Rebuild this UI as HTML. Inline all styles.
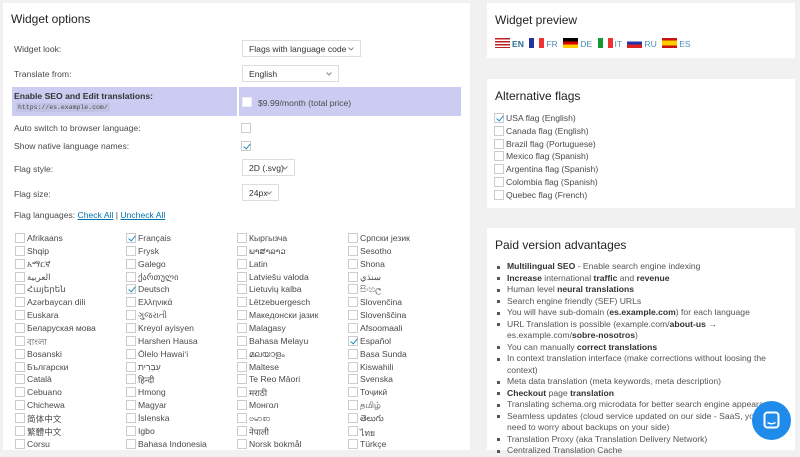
<!DOCTYPE html>
<html><head><meta charset="utf-8"><style>
*{margin:0;padding:0;box-sizing:border-box}
body{width:800px;height:450px;overflow:hidden;background:#f1f1f1;font-family:"Liberation Sans","Noto Sans CJK SC",sans-serif;font-size:8.6px;color:#4a4a4a;position:relative}
.p{position:absolute;background:#fff}
h2{position:absolute;font-size:12px;font-weight:normal;color:#222}
.a{position:absolute;white-space:nowrap}
.sel{position:absolute;border:1px solid #ddd;height:17px;background:#fff;padding:3px 6px;color:#333}
.sel svg{position:absolute;right:6px;top:6px}
.cb{position:absolute;width:10px;height:10px;border:1px solid #ccc;background:#fff}
.cb.c:after{content:"";position:absolute;left:3px;top:0px;width:3px;height:6px;border:solid #1e8cbe;border-width:0 1.5px 1.5px 0;transform:rotate(40deg)}
.g .r{position:absolute;height:12px;white-space:nowrap}
.g .r .cb{left:0;top:1px}
.g .r span{position:absolute;left:12px;top:1px}
a{color:#0073aa}
ul{position:absolute;list-style:none}
ul li{position:relative;padding-left:12px;line-height:11.5px;color:#555}
ul li:before{content:"";position:absolute;left:2px;top:4.5px;width:3px;height:3px;background:#555}
b{color:#333}
.f{display:inline-block;width:15px;height:10px;vertical-align:-1px;margin-right:2px}
</style></head><body>
<div class="p" style="left:3px;top:3px;width:467px;height:447px"></div>
<h2 style="left:11px;top:12px">Widget options</h2>
<div class="a" style="left:14px;top:44px">Widget look:</div>
<div class="sel" style="left:242px;top:40px;width:119px">Flags with language code<svg width="6" height="4"><path d="M0.5 0.5L3 3L5.5 0.5" fill="none" stroke="#888"/></svg></div>
<div class="a" style="left:14px;top:69px">Translate from:</div>
<div class="sel" style="left:242px;top:65px;width:97px">English<svg width="6" height="4"><path d="M0.5 0.5L3 3L5.5 0.5" fill="none" stroke="#888"/></svg></div>
<div class="a" style="left:12px;top:87px;width:225px;height:29px;background:#ccccf2"></div>
<div class="a" style="left:239px;top:87px;width:222px;height:29px;background:#ccccf2"></div>
<div class="a" style="left:14px;top:91px;font-weight:bold;color:#333">Enable SEO and Edit translations:</div>
<div class="a" style="left:16px;top:103px;font-family:'Liberation Mono',monospace;font-size:6.5px;background:#c2c2e4;padding:1px 2px">https://es.example.com/</div>
<div class="cb" style="left:242px;top:97px;border-color:#eee"></div>
<div class="a" style="left:258px;top:98px">$9.99/month (total price)</div>
<div class="a" style="left:14px;top:123px">Auto switch to browser language:</div>
<div class="cb" style="left:241px;top:123px"></div>
<div class="a" style="left:14px;top:141px">Show native language names:</div>
<div class="cb c" style="left:241px;top:141px"></div>
<div class="a" style="left:14px;top:164px">Flag style:</div>
<div class="sel" style="left:242px;top:159px;width:53px">2D (.svg)<svg width="6" height="4"><path d="M0.5 0.5L3 3L5.5 0.5" fill="none" stroke="#888"/></svg></div>
<div class="a" style="left:14px;top:189px">Flag size:</div>
<div class="sel" style="left:242px;top:184px;width:37px">24px<svg width="6" height="4"><path d="M0.5 0.5L3 3L5.5 0.5" fill="none" stroke="#888"/></svg></div>
<div class="a" style="left:14px;top:210px">Flag languages: <a href="#">Check All</a> | <a href="#">Uncheck All</a></div>
<div class="g" id="g"></div>

<div class="p" style="left:487px;top:3px;width:308px;height:55px"></div>
<h2 style="left:495px;top:13px">Widget preview</h2>
<div class="a" style="left:495px;top:38px;color:#4a90b8">
<span class="f" style="background:repeating-linear-gradient(#b22 0 1.5px,#fff 1.5px 3px)"></span><b style="color:#2a6f97">EN</b>
<span class="f" style="background:linear-gradient(90deg,#239 33%,#fff 33% 66%,#e33 66%);margin-left:3px"></span>FR
<span class="f" style="background:linear-gradient(#000 33%,#d00 33% 66%,#fc0 66%);margin-left:3px"></span>DE
<span class="f" style="background:linear-gradient(90deg,#193 33%,#fff 33% 66%,#e33 66%);margin-left:3px"></span>IT
<span class="f" style="background:linear-gradient(#fff 33%,#23a 33% 66%,#d22 66%);margin-left:3px"></span>RU
<span class="f" style="background:linear-gradient(#c11 25%,#fc0 25% 75%,#c11 75%);margin-left:3px"></span>ES</div>

<div class="p" style="left:487px;top:79px;width:308px;height:129px"></div>
<h2 style="left:495px;top:89px">Alternative flags</h2>
<div class="g" id="alt"></div>

<div class="p" style="left:487px;top:228px;width:308px;height:222px"></div>
<h2 style="left:495px;top:238px">Paid version advantages</h2>
<ul style="left:495px;top:261px;width:300px">
<li><b>Multilingual SEO</b> - Enable search engine indexing</li>
<li><b>Increase</b> international <b>traffic</b> and <b>revenue</b></li>
<li>Human level <b>neural translations</b></li>
<li>Search engine friendly (SEF) URLs</li>
<li>You will have sub-domain (<b>es.example.com</b>) for each language</li>
<li>URL Translation is possible (example.com/<b>about-us</b> →<br>es.example.com/<b>sobre-nosotros</b>)</li>
<li>You can manually <b>correct translations</b></li>
<li>In context translation interface (make corrections without loosing the context)</li>
<li>Meta data translation (meta keywords, meta description)</li>
<li><b>Checkout</b> page <b>translation</b></li>
<li style="white-space:nowrap">Translating schema.org microdata for better search engine appearance</li>
<li>Seamless updates (cloud service updated on our side - SaaS, you don't need to worry about backups on your side)</li>
<li>Translation Proxy (aka Translation Delivery Network)</li>
<li>Centralized Translation Cache</li>
</ul>
<div class="a" style="left:752px;top:401px;width:39px;height:39px;border-radius:50%;background:#1f8ceb"><svg width="39" height="39" style="position:absolute;left:0;top:0"><rect x="12.5" y="11.5" width="14" height="15" rx="3" fill="none" stroke="#fff" stroke-width="2"/><path d="M15.5 21.5Q19.5 24 23.5 21.5" fill="none" stroke="#fff" stroke-width="1.5"/></svg></div>

<script>
var cols=[["Afrikaans","Shqip","አማርኛ","العربية","Հայերեն","Azərbaycan dili","Euskara","Беларуская мова","বাংলা","Bosanski","Български","Català","Cebuano","Chichewa","简体中文","繁體中文","Corsu"],
["Français","Frysk","Galego","ქართული","Deutsch","Ελληνικά","ગુજરાતી","Kreyol ayisyen","Harshen Hausa","Ōlelo Hawaiʻi","עִבְרִית","हिन्दी","Hmong","Magyar","Íslenska","Igbo","Bahasa Indonesia"],
["Кыргызча","ພາສາລາວ","Latin","Latviešu valoda","Lietuvių kalba","Lëtzebuergesch","Македонски јазик","Malagasy","Bahasa Melayu","മലയാളം","Maltese","Te Reo Māori","मराठी","Монгол","ဗမာစာ","नेपाली","Norsk bokmål"],
["Српски језик","Sesotho","Shona","سنڌي","සිංහල","Slovenčina","Slovenščina","Afsoomaali","Español","Basa Sunda","Kiswahili","Svenska","Тоҷикӣ","தமிழ்","తెలుగు","ไทย","Türkçe"]];
var chk={"Français":1,"Deutsch":1,"Español":1},h="",xs=[15,126,237,348];
cols.forEach(function(c,i){c.forEach(function(n,j){h+='<div class="r" style="left:'+xs[i]+'px;top:'+(232+j*12.85)+'px"><div class="cb'+(chk[n]?' c':'')+'"></div><span>'+n+'</span></div>';});});
document.getElementById('g').innerHTML=h;
var alt=["USA flag (English)","Canada flag (English)","Brazil flag (Portuguese)","Mexico flag (Spanish)","Argentina flag (Spanish)","Colombia flag (Spanish)","Quebec flag (French)"];h="";
alt.forEach(function(n,j){h+='<div class="r" style="left:494px;top:'+(112+j*12.8)+'px"><div class="cb'+(j==0?' c':'')+'"></div><span>'+n+'</span></div>';});
document.getElementById('alt').innerHTML=h;
</script>
</body></html>
